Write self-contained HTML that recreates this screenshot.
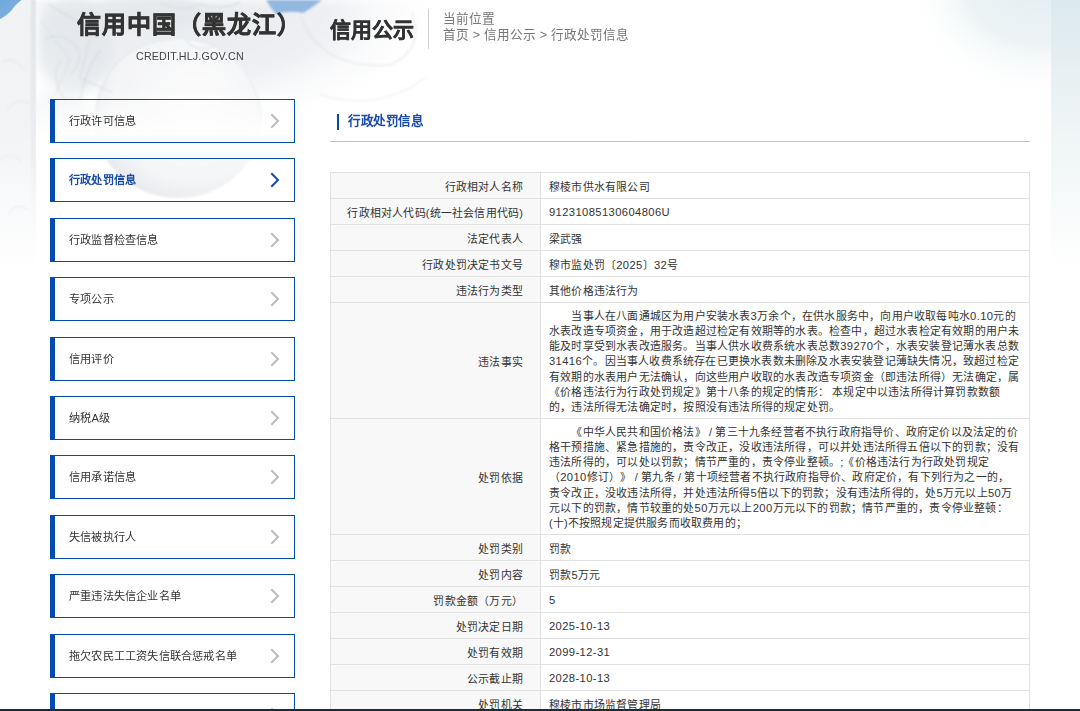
<!DOCTYPE html>
<html lang="zh-CN"><head><meta charset="utf-8">
<style>
*{margin:0;padding:0;box-sizing:border-box}
html,body{text-spacing-trim:space-all;width:1080px;height:711px;overflow:hidden;background:#fff;font-family:"Liberation Sans",sans-serif;color:#333}
.abs{position:absolute}
#bg{position:absolute;left:0;top:0;width:1080px;height:711px;overflow:hidden}
#wrap{position:absolute;left:36px;top:0;width:1015px;height:711px;background:#fff;box-shadow:-3px 0 6px rgba(0,0,0,0.05)}
.title{position:absolute;left:76.5px;top:7.5px;font-size:24px;letter-spacing:1px;font-weight:bold;color:#333;-webkit-text-stroke:0.6px #333;white-space:nowrap;line-height:34px}
.sub{position:absolute;left:136px;top:50px;font-size:10.7px;letter-spacing:0.18px;color:#444;white-space:nowrap}
.h2{position:absolute;left:330px;top:15px;font-size:21px;font-weight:bold;color:#333;-webkit-text-stroke:0.4px #333;white-space:nowrap;line-height:30px}
.vdiv{position:absolute;left:428px;top:9px;width:1px;height:40px;background:#cfcfcf}
.crumb{position:absolute;left:443px;top:12px;font-size:12.6px;word-spacing:0.3px;color:#777;line-height:15.7px;white-space:nowrap}
.nav{position:absolute;left:50px;width:245px;height:44px;border:1px solid #034bae;border-left:5px solid #034bae;background:transparent}
.nav span{position:absolute;left:14px;top:0;line-height:42px;font-size:11.2px;letter-spacing:0.2px;color:#333;white-space:nowrap}
.nav.act span{color:#1849ac;font-weight:bold}
.nav .chev{position:absolute;left:215px;top:13px}
.ctitle{position:absolute;left:348px;top:111.5px;font-size:12.6px;letter-spacing:-0.4px;font-weight:bold;color:#1849ac;line-height:18px;white-space:nowrap}
.cbar{position:absolute;left:337px;top:114px;width:2px;height:16px;background:#034bae}
.sep{position:absolute;left:330px;top:141px;width:700px;height:1px;background:#c2c2c8}
.tbl{position:absolute;left:330px;top:172px;width:700px;height:540px;font-size:10.9px;letter-spacing:0.2px;color:#333}
.row{position:absolute;left:0;width:700px;border:1px solid #e1e1e1}
.row .l{position:absolute;left:0;top:0;bottom:0;width:210px;background:#f8f8f8;border-right:1px solid #e1e1e1;display:flex;align-items:center;justify-content:flex-end;padding-right:17px;white-space:nowrap}
.row .v{position:absolute;left:210px;top:0;bottom:0;right:0;background:#fff;display:flex;align-items:center;padding-left:8px;white-space:nowrap}
.lines{position:relative;top:1.5px}
.lines div{line-height:15.05px;height:15.05px}
.bar{position:absolute;left:0;top:709px;width:1080px;height:2px;background:#1c2b3a}

.tbl .a{font-size:11.2px;letter-spacing:0.4px}

</style></head><body>
<div id="bg"><svg width="1080" height="711" viewBox="0 0 1080 711">
<defs>
<linearGradient id="lstrip" x1="0" y1="0" x2="0" y2="1"><stop offset="0" stop-color="#f0f2f4"/><stop offset="0.5" stop-color="#f2f4f6"/><stop offset="1" stop-color="#ffffff"/></linearGradient>
<linearGradient id="rstrip" x1="0" y1="0" x2="0" y2="1"><stop offset="0" stop-color="#dce9ed"/><stop offset="0.45" stop-color="#eef4f5"/><stop offset="1" stop-color="#ffffff"/></linearGradient>
<linearGradient id="lshadow" x1="0" y1="0" x2="0" y2="1"><stop offset="0" stop-color="#dde0e4"/><stop offset="0.6" stop-color="#eceef0"/><stop offset="1" stop-color="#ffffff" stop-opacity="0"/></linearGradient>
<linearGradient id="band" x1="0" y1="0" x2="0" y2="1"><stop offset="0" stop-color="#e8ebee"/><stop offset="0.6" stop-color="#f1f3f5"/><stop offset="1" stop-color="#ffffff" stop-opacity="0"/></linearGradient>
<radialGradient id="dome" cx="0.6" cy="0.4" r="0.7"><stop offset="0" stop-color="#fdfdfd"/><stop offset="0.7" stop-color="#f4f5f7"/><stop offset="1" stop-color="#e1e4e8"/></radialGradient>
<linearGradient id="skyg" x1="0" y1="0" x2="1" y2="1"><stop offset="0" stop-color="#74a9dc"/><stop offset="1" stop-color="#7cafe0"/></linearGradient>
<radialGradient id="city" cx="0.55" cy="0" r="1"><stop offset="0" stop-color="#e2eef1"/><stop offset="0.6" stop-color="#eef5f6"/><stop offset="1" stop-color="#ffffff" stop-opacity="0"/></radialGradient>
<filter id="b1" x="-30%" y="-30%" width="160%" height="160%"><feGaussianBlur stdDeviation="5"/></filter>
<filter id="b2" x="-20%" y="-20%" width="140%" height="140%"><feGaussianBlur stdDeviation="1"/></filter>
<radialGradient id="city2" cx="0.6" cy="0.25" r="0.6"><stop offset="0" stop-color="#e1edf0"/><stop offset="0.55" stop-color="#ecf3f5"/><stop offset="1" stop-color="#ffffff" stop-opacity="0"/></radialGradient>
<clipPath id="cclip"><rect x="0" y="0" width="1051" height="711"/></clipPath>
<radialGradient id="band2" cx="0.5" cy="0.5" r="0.5"><stop offset="0" stop-color="#e8ebee"/><stop offset="0.55" stop-color="#eef0f3"/><stop offset="1" stop-color="#ffffff" stop-opacity="0"/></radialGradient>
<clipPath id="lclip"><rect x="36" y="0" width="1015" height="711"/></clipPath>
<linearGradient id="wfade" x1="0" y1="0" x2="0" y2="1"><stop offset="0" stop-color="#fff" stop-opacity="0"/><stop offset="0.75" stop-color="#fff" stop-opacity="1"/><stop offset="1" stop-color="#fff" stop-opacity="1"/></linearGradient>
</defs>
<rect x="0" y="0" width="1080" height="711" fill="#fff"/>
<!-- left strip -->
<rect x="0" y="0" width="36" height="270" fill="url(#lstrip)"/>
<g filter="url(#b2)" opacity="0.7">
 <path d="M2 62 Q14 55 24 70 M6 110 Q18 96 30 104 M0 160 Q12 150 22 162 M8 215 Q16 200 28 210" stroke="#dde1e5" stroke-width="1" fill="none"/>
</g>
<rect x="31" y="0" width="5" height="260" fill="url(#lshadow)" filter="url(#b2)"/>
<!-- right strip -->
<rect x="1051" y="0" width="29" height="270" fill="url(#rstrip)"/>

<!-- top band inside container -->
<g filter="url(#b1)">
 <ellipse cx="190" cy="10" rx="260" ry="125" fill="url(#band2)" clip-path="url(#lclip)"/>
 <ellipse cx="75" cy="45" rx="38" ry="48" fill="#dfe3e8" opacity="0.55"/>
 <ellipse cx="150" cy="10" rx="55" ry="18" fill="#e2e6ea" opacity="0.6"/>
 <ellipse cx="60" cy="120" rx="30" ry="30" fill="#eceef1" opacity="0.6"/>
</g>
<g filter="url(#b2)">
 <ellipse cx="178" cy="118" rx="84" ry="80" fill="url(#dome)" opacity="0.9"/>
 <path d="M96 118 Q100 45 178 38 Q250 42 262 118" fill="none" stroke="#d6dade" stroke-width="1" opacity="0.6"/>
 <path d="M300 15 Q320 70 390 65 Q425 50 412 12" fill="none" stroke="#e0e3e7" stroke-width="1.5" opacity="0.6"/>
 <path d="M320 95 Q380 112 425 78" fill="none" stroke="#e4e7ea" stroke-width="1.5" opacity="0.6"/>
 <path d="M48 4 L92 30 L80 78 L112 92" fill="none" stroke="#d2d6db" stroke-width="1.5" opacity="0.5"/>
 <path d="M40 20 L70 60 L55 95" fill="none" stroke="#d2d6db" stroke-width="1.2" opacity="0.4"/>
 <path d="M45 40 Q60 30 75 45 Q85 60 70 75 M90 10 Q100 25 95 40 M160 2 Q180 14 200 4 Q220 12 240 2 M185 40 Q200 55 215 45 M60 60 Q50 80 65 100" fill="none" stroke="#d5d9de" stroke-width="1.4" opacity="0.55"/>
 <path d="M80 100 Q85 70 100 50" fill="none" stroke="#cfd3d8" stroke-width="1.6" opacity="0.5"/>
</g>
<rect x="36" y="85" width="600" height="75" fill="url(#wfade)"/>
<!-- sky -->
<path d="M0 0 L21.5 0 Q14 6 11 11 Q6 16 0 19 Z" fill="url(#skyg)"/>
<path d="M266 0 L322 0 Q312 8 303 13 Q290 10 276 14 Q270 7 266 0 Z" fill="#93b8e0" filter="url(#b2)"/>
<!-- right city -->
<ellipse cx="1015" cy="25" rx="115" ry="110" fill="url(#city2)" clip-path="url(#cclip)"/>
<rect x="1051" y="0" width="29" height="270" fill="url(#rstrip)"/>
</svg></div>
<div class="title">信用中国（黑龙江）</div>
<div class="sub">CREDIT.HLJ.GOV.CN</div>
<div class="h2">信用公示</div>
<div class="vdiv"></div>
<div class="crumb"><div>当前位置</div><div>首页 &gt; 信用公示 &gt; 行政处罚信息</div></div>
<div class="nav" style="top:99px"><span>行政许可信息</span><svg class="chev" width="10" height="16" viewBox="0 0 10 16"><path d="M1.3 1.2 L8 8 L1.3 14.8" fill="none" stroke="#bcbcbc" stroke-width="2"/></svg></div>
<div class="nav act" style="top:158px"><span>行政处罚信息</span><svg class="chev" width="10" height="16" viewBox="0 0 10 16"><path d="M1.3 1.2 L8 8 L1.3 14.8" fill="none" stroke="#1849ac" stroke-width="2"/></svg></div>
<div class="nav" style="top:218px"><span>行政监督检查信息</span><svg class="chev" width="10" height="16" viewBox="0 0 10 16"><path d="M1.3 1.2 L8 8 L1.3 14.8" fill="none" stroke="#bcbcbc" stroke-width="2"/></svg></div>
<div class="nav" style="top:277px"><span>专项公示</span><svg class="chev" width="10" height="16" viewBox="0 0 10 16"><path d="M1.3 1.2 L8 8 L1.3 14.8" fill="none" stroke="#bcbcbc" stroke-width="2"/></svg></div>
<div class="nav" style="top:337px"><span>信用评价</span><svg class="chev" width="10" height="16" viewBox="0 0 10 16"><path d="M1.3 1.2 L8 8 L1.3 14.8" fill="none" stroke="#bcbcbc" stroke-width="2"/></svg></div>
<div class="nav" style="top:396px"><span>纳税A级</span><svg class="chev" width="10" height="16" viewBox="0 0 10 16"><path d="M1.3 1.2 L8 8 L1.3 14.8" fill="none" stroke="#bcbcbc" stroke-width="2"/></svg></div>
<div class="nav" style="top:455px"><span>信用承诺信息</span><svg class="chev" width="10" height="16" viewBox="0 0 10 16"><path d="M1.3 1.2 L8 8 L1.3 14.8" fill="none" stroke="#bcbcbc" stroke-width="2"/></svg></div>
<div class="nav" style="top:515px"><span>失信被执行人</span><svg class="chev" width="10" height="16" viewBox="0 0 10 16"><path d="M1.3 1.2 L8 8 L1.3 14.8" fill="none" stroke="#bcbcbc" stroke-width="2"/></svg></div>
<div class="nav" style="top:574px"><span>严重违法失信企业名单</span><svg class="chev" width="10" height="16" viewBox="0 0 10 16"><path d="M1.3 1.2 L8 8 L1.3 14.8" fill="none" stroke="#bcbcbc" stroke-width="2"/></svg></div>
<div class="nav" style="top:634px"><span>拖欠农民工工资失信联合惩戒名单</span><svg class="chev" width="10" height="16" viewBox="0 0 10 16"><path d="M1.3 1.2 L8 8 L1.3 14.8" fill="none" stroke="#bcbcbc" stroke-width="2"/></svg></div>
<div class="nav" style="top:693px"><span></span><svg class="chev" width="10" height="16" viewBox="0 0 10 16"><path d="M1.3 1.2 L8 8 L1.3 14.8" fill="none" stroke="#bcbcbc" stroke-width="2"/></svg></div>
<div class="cbar"></div>
<div class="ctitle">行政处罚信息</div>
<div class="sep"></div>
<div class="tbl">
<div class="row" style="top:0px;height:27px"><div class="l"><span>行政相对人名称</span></div><div class="v"><span>穆棱市供水有限公司</span></div></div>
<div class="row" style="top:26px;height:27px"><div class="l"><span>行政相对人代码(统一社会信用代码)</span></div><div class="v"><span><span class="a">91231085130604806U</span></span></div></div>
<div class="row" style="top:52px;height:27px"><div class="l"><span>法定代表人</span></div><div class="v"><span>梁武强</span></div></div>
<div class="row" style="top:78px;height:27px"><div class="l"><span>行政处罚决定书文号</span></div><div class="v"><span>穆市监处罚〔<span class="a">2025</span>〕<span class="a">32</span>号</span></div></div>
<div class="row" style="top:104px;height:27px"><div class="l"><span>违法行为类型</span></div><div class="v"><span>其他价格违法行为</span></div></div>
<div class="row" style="top:130px;height:117px"><div class="l"><span>违法事实</span></div><div class="v"><div class="lines"><div>　　当事人在八面通城区为用户安装水表<span class="a">3</span>万余个，在供水服务中，向用户收取每吨水<span class="a">0.10</span>元的</div><div>水表改造专项资金，用于改造超过检定有效期等的水表。检查中，超过水表检定有效期的用户未</div><div>能及时享受到水表改造服务。当事人供水收费系统水表总数<span class="a">39270</span>个，水表安装登记薄水表总数</div><div><span class="a">31416</span>个。因当事人收费系统存在已更换水表数未删除及水表安装登记薄缺失情况，致超过检定</div><div>有效期的水表用户无法确认，向这些用户收取的水表改造专项资金（即违法所得）无法确定，属</div><div>《价格违法行为行政处罚规定》第十八条的规定的情形： 本规定中以违法所得计算罚款数额</div><div>的，违法所得无法确定时，按照没有违法所得的规定处罚。</div></div></div></div>
<div class="row" style="top:246px;height:117px"><div class="l"><span>处罚依据</span></div><div class="v"><div class="lines"><div>　　《中华人民共和国价格法》 / 第三十九条经营者不执行政府指导价、政府定价以及法定的价</div><div>格干预措施、紧急措施的，责令改正，没收违法所得，可以并处违法所得五倍以下的罚款；没有</div><div>违法所得的，可以处以罚款；情节严重的，责令停业整顿。;《价格违法行为行政处罚规定</div><div>（<span class="a">2010</span>修订）》 / 第九条 / 第十项经营者不执行政府指导价、政府定价，有下列行为之一的，</div><div>责令改正，没收违法所得，并处违法所得<span class="a">5</span>倍以下的罚款；没有违法所得的，处<span class="a">5</span>万元以上<span class="a">50</span>万</div><div>元以下的罚款，情节较重的处<span class="a">50</span>万元以上<span class="a">200</span>万元以下的罚款；情节严重的，责令停业整顿：</div><div>(十)不按照规定提供服务而收取费用的；</div></div></div></div>
<div class="row" style="top:362px;height:27px"><div class="l"><span>处罚类别</span></div><div class="v"><span>罚款</span></div></div>
<div class="row" style="top:388px;height:27px"><div class="l"><span>处罚内容</span></div><div class="v"><span>罚款<span class="a">5</span>万元</span></div></div>
<div class="row" style="top:414px;height:27px"><div class="l"><span>罚款金额（万元）</span></div><div class="v"><span><span class="a">5</span></span></div></div>
<div class="row" style="top:440px;height:27px"><div class="l"><span>处罚决定日期</span></div><div class="v"><span><span class="a">2025-10-13</span></span></div></div>
<div class="row" style="top:466px;height:27px"><div class="l"><span>处罚有效期</span></div><div class="v"><span><span class="a">2099-12-31</span></span></div></div>
<div class="row" style="top:492px;height:27px"><div class="l"><span>公示截止期</span></div><div class="v"><span><span class="a">2028-10-13</span></span></div></div>
<div class="row" style="top:518px;height:27px"><div class="l"><span>处罚机关</span></div><div class="v"><span>穆棱市市场监督管理局</span></div></div>
</div>
<div class="bar"></div>
</body></html>
